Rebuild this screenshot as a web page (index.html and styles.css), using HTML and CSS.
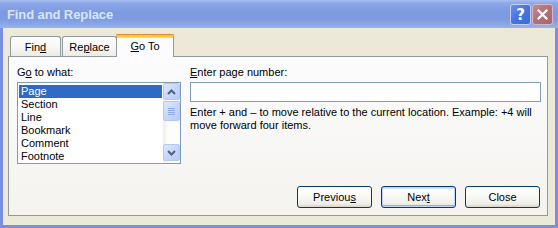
FILE: index.html
```html
<!DOCTYPE html>
<html lang="en">
<head>
    <meta charset="UTF-8">
    <title>Find and Replace</title>
    <link rel="stylesheet" href="styles.css">
</head>
<body>
    <div class="window">
        <div class="titlebar">
            <span class="title">Find and Replace</span>
            <div class="caption-btns">
                <span class="cap-btn help">?</span>
                <span class="cap-btn close">
                    <svg width="11" height="11" viewBox="0 0 11 11">
                        <path d="M1.5 1.5 L9.5 9.5 M9.5 1.5 L1.5 9.5" stroke="#fff" stroke-width="2.2" stroke-linecap="square"/>
                    </svg>
                </span>
            </div>
        </div>
        <div class="frame">
            <div class="tabs">
                <div class="tab tab-find">Fin<u>d</u></div>
                <div class="tab tab-replace">Re<u>p</u>lace</div>
                <div class="tab tab-goto selected"><u>G</u>o To</div>
            </div>
            <div class="panel">
                <div class="fields">
                    <div class="col-left">
                        <div class="label">G<u>o</u> to what:</div>
                        <div class="listbox">
                            <div class="list">
                                <div class="item selected">Page</div>
                                <div class="item">Section</div>
                                <div class="item">Line</div>
                                <div class="item">Bookmark</div>
                                <div class="item">Comment</div>
                                <div class="item">Footnote</div>
                            </div>
                            <div class="scrollbar">
                                <div class="sb-btn">
                                    <svg width="9" height="6" viewBox="0 0 9 6"><path d="M1 5 L4.5 1.5 L8 5" fill="none" stroke="#4d6185" stroke-width="2"/></svg>
                                </div>
                                <div class="sb-thumb">
                                    <span></span><span></span><span></span><span></span>
                                </div>
                                <div class="sb-track"></div>
                                <div class="sb-btn">
                                    <svg width="9" height="6" viewBox="0 0 9 6"><path d="M1 1 L4.5 4.5 L8 1" fill="none" stroke="#4d6185" stroke-width="2"/></svg>
                                </div>
                            </div>
                        </div>
                    </div>
                    <div class="col-right">
                        <div class="label"><u>E</u>nter page number:</div>
                        <div class="textbox"></div>
                        <div class="hint">Enter + and &ndash; to move relative to the current location. Example: +4 will<br>move forward four items.</div>
                    </div>
                </div>
                <div class="actions">
                    <button class="btn">Previou<u>s</u></button>
                    <button class="btn default">Nex<u>t</u></button>
                    <button class="btn">Close</button>
                </div>
            </div>
        </div>
    </div>
</body>
</html>
```

FILE: styles.css
```css
body {
    margin: 0;
    font-family: "Liberation Sans", Arial, sans-serif;
    font-size: 11px;
    background: #ece9d8;
}
u {
    text-decoration: underline;
    text-underline-offset: 1px;
}
.window {
    width: 558px;
    height: 228px;
    display: flex;
    flex-direction: column;
}
.titlebar {
    height: 28px;
    display: flex;
    align-items: flex-start;
    justify-content: space-between;
    padding: 0 5px 0 7px;
    box-sizing: border-box;
    background: linear-gradient(#a9bff1 0%, #8ba7e8 12%, #7d9ae1 45%, #7f9ce2 70%, #8eabea 92%, #99b4ee 100%);
}
.title {
    margin-top: 7px;
    font-weight: bold;
    font-size: 13px;
    line-height: 16px;
    color: #d8e4f8;
    letter-spacing: -0.1px;
}
.caption-btns {
    display: flex;
    gap: 1px;
    margin-top: 4px;
}
.cap-btn {
    width: 21px;
    height: 21px;
    box-sizing: border-box;
    border: 1px solid #c3d0f3;
    border-radius: 3px;
    display: flex;
    align-items: center;
    justify-content: center;
}
.help {
    background: linear-gradient(135deg, #6b90ee 0%, #4673e2 50%, #3e6bdc 100%);
    color: #fff;
    font-weight: bold;
    font-size: 15px;
    font-family: "DejaVu Sans", sans-serif;
}
.close {
    background: linear-gradient(135deg, #c28891 0%, #b0707a 50%, #a8646e 100%);
    border-color: #d2b8c6;
}
.frame {
    flex: 1;
    border: 3px solid #7b8fe0;
    border-top: none;
    background: #ece9d8;
    padding: 6px 7px 9px 5px;
    display: flex;
    flex-direction: column;
}
.tabs {
    display: flex;
    align-items: flex-end;
    height: 22px;
    padding-left: 2px;
    position: relative;
    z-index: 1;
}
.tab {
    height: 20px;
    box-sizing: border-box;
    border: 1px solid #919b9c;
    border-bottom: none;
    border-radius: 3px 3px 0 0;
    background: linear-gradient(#fefefe, #f6f5f1 60%, #ecebe5);
    display: flex;
    align-items: center;
    justify-content: center;
    padding-top: 1px;
    color: #000;
}
.tab-find {
    width: 51px;
}
.tab-replace {
    width: 55px;
    margin-left: 1px;
}
.tab-goto {
    width: 58px;
    margin-left: -1px;
}
.tab.selected {
    height: 23px;
    margin-bottom: -1px;
    border-top: 3px solid #ffc83c;
    box-shadow: inset 0 1px 0 #ffd876;
    border-radius: 3px 3px 0 0;
    background: #fcfcfe;
    padding-top: 0;
    padding-bottom: 2px;
    position: relative;
}
.tab.selected::before {
    content: "";
    position: absolute;
    left: -1px;
    right: -1px;
    top: -3px;
    height: 1px;
    background: #e68b2c;
    border-radius: 3px 3px 0 0;
}
.panel {
    height: 160px;
    box-sizing: border-box;
    border: 1px solid #919b9c;
    background: linear-gradient(#fcfcfe, #f4f3ee);
    padding: 9px 6px 7px 8px;
    display: flex;
    flex-direction: column;
}
.fields {
    display: flex;
    gap: 9px;
}
.label {
    line-height: 13px;
    margin-bottom: 3px;
}
.listbox {
    width: 164px;
    height: 82px;
    box-sizing: border-box;
    border: 1px solid #7f9db9;
    background: #fff;
    display: flex;
}
.list {
    flex: 1;
    padding: 2px 1px 0 1px;
}
.item {
    height: 13px;
    line-height: 13px;
    padding-left: 2px;
}
.item.selected {
    background: #316ac5;
    color: #fff;
}
.scrollbar {
    width: 17px;
    display: flex;
    flex-direction: column;
    background: linear-gradient(90deg, #eeede5, #fdfdfa 30%, #fefefe);
    padding-bottom: 2px;
}
.sb-btn,
.sb-thumb {
    box-sizing: border-box;
    border: 1px solid #b4c8f6;
    border-radius: 2px;
    background: linear-gradient(135deg, #dfe8fd 0%, #c8d7fc 50%, #b9cbf8 100%);
    display: flex;
    align-items: center;
    justify-content: center;
}
.sb-btn {
    height: 17px;
}
.sb-thumb {
    height: 20px;
    margin-top: 1px;
    flex-direction: column;
    gap: 1px;
}
.sb-thumb span {
    width: 7px;
    height: 1px;
    background: #8ea9e8;
}
.sb-track {
    flex: 1;
}
.col-right {
    width: 351px;
}
.textbox {
    height: 20px;
    box-sizing: border-box;
    border: 1px solid #7f9db9;
    background: #fff;
}
.hint {
    margin-top: 4px;
    line-height: 13px;
    white-space: nowrap;
}
.actions {
    margin-top: auto;
    margin-right: 1px;
    display: flex;
    justify-content: flex-end;
    gap: 9px;
}
.btn {
    width: 75px;
    height: 22px;
    box-sizing: border-box;
    border: 1px solid #003c74;
    border-radius: 3px;
    background: linear-gradient(#ffffff, #f7f7f4 55%, #eeede7 85%, #d8d3c8);
    font-family: inherit;
    font-size: 11px;
    color: #000;
    padding: 0;
}
.btn.default {
    box-shadow: inset 0 0 0 1px #c2d4f7, inset 0 -2px 0 0 #8fb0ee, inset 0 2px 0 0 #d4e1fb;
}
```
